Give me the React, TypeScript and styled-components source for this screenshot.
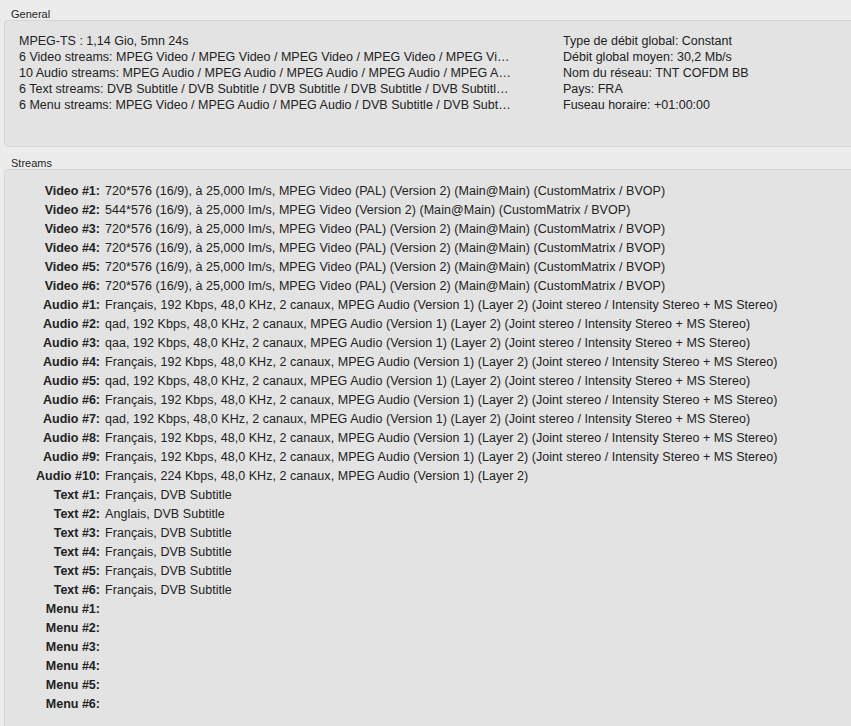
import React from "react";
import styled, { createGlobalStyle } from "styled-components";

const Global = createGlobalStyle`
  html, body { margin: 0; padding: 0; }
  body {
    background: #ececec;
    font-family: "Liberation Sans", Arial, sans-serif;
    color: #222;
    overflow: hidden;
    width: 851px;
    height: 726px;
  }
`;

const Page = styled.div`
  display: flex;
  flex-direction: column;
  padding: 7px 0 0 4px;
  height: 726px;
  box-sizing: border-box;
`;

const SectionLabel = styled.div`
  font-size: 11px;
  line-height: 14px;
  height: 13px;
  padding-left: 7px;
  color: #262626;
`;

const Box = styled.div<{ $grow?: boolean }>`
  background: #e3e3e3;
  border: 1px solid #d5d5d5;
  border-radius: 4px;
  margin-right: -6px;
  box-sizing: border-box;
  ${(p) => (p.$grow ? "flex: 1; margin-bottom: -6px;" : "")}
`;

const GeneralBox = styled(Box)`
  height: 127px;
  padding: 12px 0 0 14px;
  display: grid;
  grid-template-columns: 493px 1fr;
  column-gap: 51px;
  align-content: start;
  margin-bottom: 9px;
`;

const Column = styled.div`
  display: flex;
  flex-direction: column;
  min-width: 0;
`;

const GLine = styled.div`
  font-size: 12.5px;
  line-height: 16px;
  white-space: nowrap;
  overflow: hidden;
  text-overflow: ellipsis;
`;

const StreamsBox = styled(Box)`
  padding: 12px 0 0 0;
  display: grid;
  grid-template-columns: 95px 1fr;
  column-gap: 5px;
  align-content: start;
`;

const RowLabel = styled.div`
  font-size: 12.5px;
  line-height: 19px;
  font-weight: bold;
  text-align: right;
  white-space: nowrap;
`;

const RowValue = styled.div`
  font-size: 12.5px;
  letter-spacing: 0.05px;
  line-height: 19px;
  white-space: nowrap;
`;

const generalLeft = [
  "MPEG-TS : 1,14 Gio, 5mn 24s",
  "6 Video streams: MPEG Video / MPEG Video / MPEG Video / MPEG Video / MPEG Video / MPEG Video",
  "10 Audio streams: MPEG Audio / MPEG Audio / MPEG Audio / MPEG Audio / MPEG Audio / MPEG Audio",
  "6 Text streams: DVB Subtitle / DVB Subtitle / DVB Subtitle / DVB Subtitle / DVB Subtitle / DVB Subtitle",
  "6 Menu streams: MPEG Video / MPEG Audio / MPEG Audio / DVB Subtitle / DVB Subtitle / DVB Subtitle",
];

const generalRight = [
  "Type de débit global: Constant",
  "Débit global moyen: 30,2 Mb/s",
  "Nom du réseau: TNT COFDM BB",
  "Pays: FRA",
  "Fuseau horaire: +01:00:00",
];

const v1 = "720*576 (16/9), à 25,000 Im/s, MPEG Video (PAL) (Version 2) (Main@Main) (CustomMatrix / BVOP)";
const v2 = "544*576 (16/9), à 25,000 Im/s, MPEG Video (Version 2) (Main@Main) (CustomMatrix / BVOP)";
const aFr = "Français, 192 Kbps, 48,0 KHz, 2 canaux, MPEG Audio (Version 1) (Layer 2) (Joint stereo / Intensity Stereo + MS Stereo)";
const aQad = "qad, 192 Kbps, 48,0 KHz, 2 canaux, MPEG Audio (Version 1) (Layer 2) (Joint stereo / Intensity Stereo + MS Stereo)";
const aQaa = "qaa, 192 Kbps, 48,0 KHz, 2 canaux, MPEG Audio (Version 1) (Layer 2) (Joint stereo / Intensity Stereo + MS Stereo)";

const streams: [string, string][] = [
  ["Video #1:", v1],
  ["Video #2:", v2],
  ["Video #3:", v1],
  ["Video #4:", v1],
  ["Video #5:", v1],
  ["Video #6:", v1],
  ["Audio #1:", aFr],
  ["Audio #2:", aQad],
  ["Audio #3:", aQaa],
  ["Audio #4:", aFr],
  ["Audio #5:", aQad],
  ["Audio #6:", aFr],
  ["Audio #7:", aQad],
  ["Audio #8:", aFr],
  ["Audio #9:", aFr],
  ["Audio #10:", "Français, 224 Kbps, 48,0 KHz, 2 canaux, MPEG Audio (Version 1) (Layer 2)"],
  ["Text #1:", "Français, DVB Subtitle"],
  ["Text #2:", "Anglais, DVB Subtitle"],
  ["Text #3:", "Français, DVB Subtitle"],
  ["Text #4:", "Français, DVB Subtitle"],
  ["Text #5:", "Français, DVB Subtitle"],
  ["Text #6:", "Français, DVB Subtitle"],
  ["Menu #1:", ""],
  ["Menu #2:", ""],
  ["Menu #3:", ""],
  ["Menu #4:", ""],
  ["Menu #5:", ""],
  ["Menu #6:", ""],
];

export default function App() {
  return (
    <>
      <Global />
      <Page>
        <SectionLabel>General</SectionLabel>
        <GeneralBox>
          <Column>
            {generalLeft.map((l, i) => (
              <GLine key={i}>{l}</GLine>
            ))}
          </Column>
          <Column>
            {generalRight.map((l, i) => (
              <GLine key={i}>{l}</GLine>
            ))}
          </Column>
        </GeneralBox>
        <SectionLabel>Streams</SectionLabel>
        <StreamsBox $grow>
          {streams.map(([k, v], i) => (
            <React.Fragment key={i}>
              <RowLabel>{k}</RowLabel>
              <RowValue>{v}</RowValue>
            </React.Fragment>
          ))}
        </StreamsBox>
      </Page>
    </>
  );
}
